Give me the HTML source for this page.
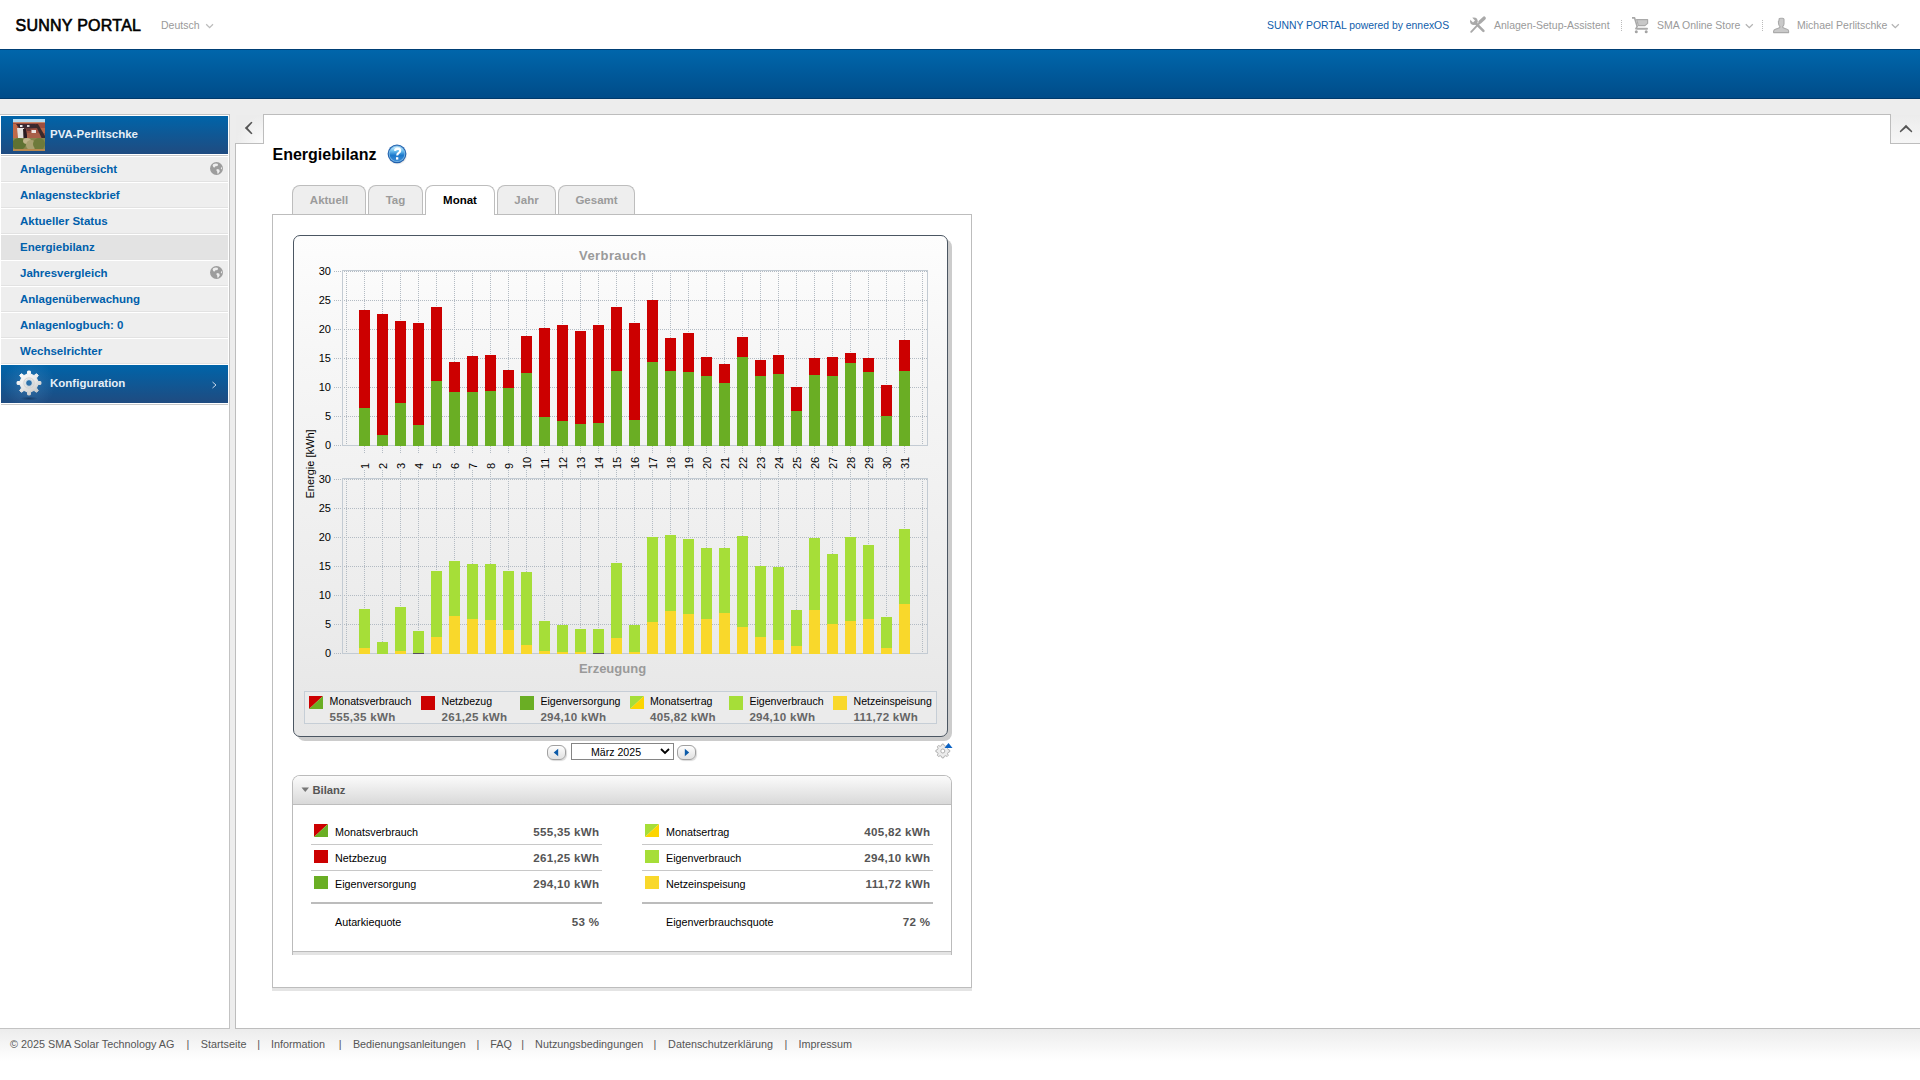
<!DOCTYPE html>
<html><head><meta charset="utf-8"><title>Sunny Portal - Energiebilanz</title>
<style>
*{margin:0;padding:0;box-sizing:border-box}
html,body{width:1920px;height:1080px;overflow:hidden;background:#fff;font-family:"Liberation Sans",sans-serif;color:#000}
.a{position:absolute}
.t{position:absolute;white-space:nowrap;line-height:1}
.b{font-weight:bold}
svg{position:absolute;overflow:visible}
</style></head><body>
<div class="t" style="left:15.5px;top:17.70px;font-size:16px;color:#000;letter-spacing:0.25px;-webkit-text-stroke:0.6px #000;">SUNNY PORTAL</div>
<div class="t" style="left:161px;top:20.05px;font-size:10.5px;color:#999;">Deutsch</div>
<svg style="left:204px;top:21px" width="11" height="9"><polyline points="2.2,3.2 5.6,6.6 9,3.2" fill="none" stroke="#bcbcbc" stroke-width="1.3"/></svg>
<div class="t" style="left:1267px;top:21.00px;font-size:10.4px;color:#0f5dab;">SUNNY PORTAL powered by ennexOS</div>
<svg style="left:1466px;top:14px" width="24" height="22" viewBox="1466 14 24 22">
<g stroke="#a9a9a9" fill="none">
<line x1="1474.6" y1="22.2" x2="1483.4" y2="30.9" stroke-width="2.6" stroke-linecap="round"/>
<line x1="1479.2" y1="23.4" x2="1471.2" y2="31.8" stroke-width="1.9" stroke-linecap="round"/>
<line x1="1480.0" y1="22.0" x2="1484.1" y2="18.2" stroke-width="3.5" stroke-linecap="round"/>
</g>
<circle cx="1473.9" cy="21.3" r="3.8" fill="#a9a9a9"/>
<polygon points="1475.0,20.4 1473.0,22.4 1468.6,18.0 1470.6,16.0" fill="#ffffff"/>
</svg>
<div class="t" style="left:1494px;top:20.45px;font-size:10.5px;color:#9a9a9a;">Anlagen-Setup-Assistent</div>
<div class="a" style="left:1621px;top:20px;width:1px;height:11px;background:repeating-linear-gradient(#bbb 0 1px,transparent 1px 2px)"></div>
<svg style="left:1628px;top:14px" width="24" height="22" viewBox="1628 14 24 22">
<path d="M1636.6 19.6 L1647.6 19.6 L1647.6 23.4 L1645 25.6 L1638.4 25.6 Z" fill="#c8c8c8" stroke="#aaaaaa" stroke-width="1.2" stroke-linejoin="round"/>
<path d="M1632 17.9 L1634.6 17.9 L1637.2 26.4 L1635.6 29.4" fill="none" stroke="#a8a8a8" stroke-width="1.6" stroke-linejoin="round"/>
<rect x="1636.2" y="27.8" width="11.8" height="1.9" rx="0.9" fill="#ababab"/>
<circle cx="1636.3" cy="31.8" r="1.5" fill="#a4a4a4"/><circle cx="1646.2" cy="31.8" r="1.5" fill="#a4a4a4"/>
</svg>
<div class="t" style="left:1657px;top:20.45px;font-size:10.5px;color:#9a9a9a;">SMA Online Store</div>
<svg style="left:1744px;top:22px" width="10" height="8"><polyline points="1.8,2.2 5.3,5.7 8.8,2.2" fill="none" stroke="#b4b4b4" stroke-width="1.3"/></svg>
<div class="a" style="left:1762px;top:20px;width:1px;height:11px;background:repeating-linear-gradient(#bbb 0 1px,transparent 1px 2px)"></div>
<svg style="left:1769px;top:14px" width="24" height="22" viewBox="1769 14 24 22">
<path d="M1779.2 18.8 Q1779.4 18.3 1780.8 18.3 L1782.6 18.3 Q1783.9 18.3 1784 19.4 L1784 24 Q1783.8 25.6 1782.6 26.6 L1782.8 27.4 Q1785 28.6 1786.4 29 Q1788.6 29.6 1788.6 31 L1788.6 32.6 L1773.6 32.6 L1773.6 31 Q1773.8 29.6 1776 29 Q1777.6 28.6 1779.8 27.4 L1780 26.6 Q1778.8 25.4 1778.6 24 L1778.4 21.4 L1778.9 20.8 Z" fill="#c9c9c9" stroke="#aaaaaa" stroke-width="1.1" stroke-linejoin="round"/>
</svg>
<div class="t" style="left:1797px;top:20.45px;font-size:10.5px;color:#9a9a9a;">Michael Perlitschke</div>
<svg style="left:1890px;top:22px" width="10" height="8"><polyline points="1.8,2.2 5.3,5.7 8.8,2.2" fill="none" stroke="#b4b4b4" stroke-width="1.3"/></svg>
<div class="a" style="left:0px;top:49px;width:1920px;height:50px;background:linear-gradient(#0066ab,#004c89);border-top:1px solid #003f75;border-bottom:1px solid #003a6c"></div>
<div class="a" style="left:0px;top:99px;width:1920px;height:930px;background:#ededed"></div>
<div class="a" style="left:0px;top:114px;width:230px;height:915px;background:#fff;border-top:1px solid #c3c3c3;border-right:1px solid #c3c3c3;border-bottom:1px solid #c3c3c3"></div>
<div class="a" style="left:1px;top:116px;width:227px;height:38px;background:linear-gradient(#0064a9,#1f4b80)"></div>
<div class="a" style="left:1px;top:155px;width:227px;height:1px;background:#c9c9c9"></div>
<svg style="left:13px;top:119px;overflow:hidden" width="32" height="32" viewBox="0 0 32 32">
<defs><filter id="bl" x="0" y="0" width="32" height="32" filterUnits="userSpaceOnUse"><feGaussianBlur stdDeviation="0.55"/></filter></defs>
<rect x="0" y="0" width="32" height="32" fill="#9a5a42"/>
<g filter="url(#bl)">
<rect x="-2" y="-2" width="36" height="5" fill="#b4dcf2"/>
<rect x="-2" y="3" width="36" height="2" fill="#c9886a"/>
<rect x="-2" y="4" width="36" height="18" fill="#9e5040"/>
<path d="M0 5 L4 5 L5 22 L0 22 Z" fill="#c06a48"/>
<path d="M3 5 L22 5 L26 9 L7 10 Z" fill="#3a2c30"/>
<rect x="7" y="6" width="2.5" height="2" fill="#e8e8ec"/>
<rect x="14" y="6" width="2.5" height="2" fill="#d8d0d0"/>
<path d="M4 9 L11 9 L11 19 L5 19 Z" fill="#e6e2de"/>
<path d="M10 10 L13 10 L14.5 19 L10.5 19 Z" fill="#2a1c22"/>
<path d="M13 9 L17 9 L18 12 L14 12 Z" fill="#6a3a38"/>
<rect x="18.5" y="11" width="4.5" height="3.2" fill="#ece6e2"/>
<path d="M14 14 L28 14 L30 21 L14 21 Z" fill="#a86048"/>
<path d="M24 9 L32 9 L32 14 L27 14 Z" fill="#b8684a"/>
<path d="M22 5 L25 5 L32 17 L32 21 L29.5 21 Z" fill="#3e2a2c"/>
<rect x="-2" y="19" width="36" height="14" fill="#86864e"/>
<ellipse cx="6" cy="25" rx="7" ry="6" fill="#5e7232"/>
<ellipse cx="14" cy="22" rx="4" ry="3" fill="#c0b48a"/>
<ellipse cx="18" cy="26" rx="5" ry="5" fill="#a8a070"/>
<ellipse cx="26" cy="25" rx="6" ry="6" fill="#6e7a3a"/>
<rect x="-2" y="30" width="36" height="4" fill="#b88850"/>
</g></svg>
<div class="t" style="left:50px;top:128.55px;font-size:11.5px;color:#e6eef7;font-weight:bold;">PVA-Perlitschke</div>
<div class="a" style="left:1px;top:157px;width:227px;height:24px;background:#eeeeee"></div>
<div class="a" style="left:1px;top:181px;width:227px;height:1px;background:#e2e2e2"></div>
<div class="t" style="left:20px;top:163.75px;font-size:11.5px;color:#0060ab;font-weight:bold;">Anlagen&uuml;bersicht</div>
<svg style="left:210px;top:162px" width="13" height="13" viewBox="0 0 13 13">
<circle cx="6.5" cy="6.5" r="6.5" fill="#9d9d9d"/>
<path d="M3.2 2.2 Q5.5 1 7.5 1.8 L8.2 3 L7 4.2 L5.8 4 L4.6 5.6 L3.4 5.2 L2.6 3.6 Z" fill="#eee"/>
<path d="M6.8 7 L9.2 7.6 L9.8 9.2 L8.4 11.6 L7.4 11.8 L7.2 9.4 L6.4 8.4 Z" fill="#eee"/>
<path d="M11.2 5 L12.2 6 L11.8 7.6 L10.8 6.6 Z" fill="#eee"/>
</svg>
<div class="a" style="left:1px;top:183px;width:227px;height:24px;background:#eeeeee"></div>
<div class="a" style="left:1px;top:207px;width:227px;height:1px;background:#e2e2e2"></div>
<div class="t" style="left:20px;top:189.75px;font-size:11.5px;color:#0060ab;font-weight:bold;">Anlagensteckbrief</div>
<div class="a" style="left:1px;top:209px;width:227px;height:24px;background:#eeeeee"></div>
<div class="a" style="left:1px;top:233px;width:227px;height:1px;background:#e2e2e2"></div>
<div class="t" style="left:20px;top:215.75px;font-size:11.5px;color:#0060ab;font-weight:bold;">Aktueller Status</div>
<div class="a" style="left:1px;top:235px;width:227px;height:24px;background:#e3e3e3"></div>
<div class="a" style="left:1px;top:259px;width:227px;height:1px;background:#e2e2e2"></div>
<div class="t" style="left:20px;top:241.75px;font-size:11.5px;color:#0060ab;font-weight:bold;">Energiebilanz</div>
<div class="a" style="left:1px;top:261px;width:227px;height:24px;background:#eeeeee"></div>
<div class="a" style="left:1px;top:285px;width:227px;height:1px;background:#e2e2e2"></div>
<div class="t" style="left:20px;top:267.75px;font-size:11.5px;color:#0060ab;font-weight:bold;">Jahresvergleich</div>
<svg style="left:210px;top:266px" width="13" height="13" viewBox="0 0 13 13">
<circle cx="6.5" cy="6.5" r="6.5" fill="#9d9d9d"/>
<path d="M3.2 2.2 Q5.5 1 7.5 1.8 L8.2 3 L7 4.2 L5.8 4 L4.6 5.6 L3.4 5.2 L2.6 3.6 Z" fill="#eee"/>
<path d="M6.8 7 L9.2 7.6 L9.8 9.2 L8.4 11.6 L7.4 11.8 L7.2 9.4 L6.4 8.4 Z" fill="#eee"/>
<path d="M11.2 5 L12.2 6 L11.8 7.6 L10.8 6.6 Z" fill="#eee"/>
</svg>
<div class="a" style="left:1px;top:287px;width:227px;height:24px;background:#eeeeee"></div>
<div class="a" style="left:1px;top:311px;width:227px;height:1px;background:#e2e2e2"></div>
<div class="t" style="left:20px;top:293.75px;font-size:11.5px;color:#0060ab;font-weight:bold;">Anlagen&uuml;berwachung</div>
<div class="a" style="left:1px;top:313px;width:227px;height:24px;background:#eeeeee"></div>
<div class="a" style="left:1px;top:337px;width:227px;height:1px;background:#e2e2e2"></div>
<div class="t" style="left:20px;top:319.75px;font-size:11.5px;color:#0060ab;font-weight:bold;">Anlagenlogbuch: 0</div>
<div class="a" style="left:1px;top:339px;width:227px;height:24px;background:#eeeeee"></div>
<div class="a" style="left:1px;top:363px;width:227px;height:1px;background:#e2e2e2"></div>
<div class="t" style="left:20px;top:345.75px;font-size:11.5px;color:#0060ab;font-weight:bold;">Wechselrichter</div>
<div class="a" style="left:1px;top:365px;width:227px;height:38px;background:radial-gradient(circle at 28px 19px,rgba(120,175,225,0.30) 0,rgba(120,175,225,0.12) 14px,rgba(120,175,225,0) 26px),linear-gradient(#0064a9,#1f4b80)"></div>
<div class="a" style="left:1px;top:404px;width:227px;height:1px;background:#c9c9c9"></div>
<svg style="left:12px;top:366px" width="34" height="36" viewBox="12 366 34 36"><defs><linearGradient id="gg" x1="0.2" y1="0" x2="0.8" y2="1"><stop offset="0" stop-color="#ffffff"/><stop offset="0.55" stop-color="#e6e6e6"/><stop offset="1" stop-color="#c4c4c4"/></linearGradient><radialGradient id="gsh" cx="0.5" cy="0.5" r="0.5"><stop offset="0" stop-color="#0a2a50" stop-opacity="0.6"/><stop offset="1" stop-color="#0a2a50" stop-opacity="0"/></radialGradient></defs><ellipse cx="29" cy="398.5" rx="9" ry="2" fill="url(#gsh)"/><path d="M27.28,374.17 L27.75,371.07 L30.25,371.07 L30.72,374.17 L34.03,375.54 L36.55,373.67 L38.33,375.45 L36.46,377.97 L37.83,381.28 L40.93,381.75 L40.93,384.25 L37.83,384.72 L36.46,388.03 L38.33,390.55 L36.55,392.33 L34.03,390.46 L30.72,391.83 L30.25,394.93 L27.75,394.93 L27.28,391.83 L23.97,390.46 L21.45,392.33 L19.67,390.55 L21.54,388.03 L20.17,384.72 L17.07,384.25 L17.07,381.75 L20.17,381.28 L21.54,377.97 L19.67,375.45 L21.45,373.67 L23.97,375.54 Z M32.4,383 A3.4,3.4 0 1 0 25.6,383 A3.4,3.4 0 1 0 32.4,383 Z" fill="url(#gg)" fill-rule="evenodd" stroke="url(#gg)" stroke-width="1" stroke-linejoin="round" /><circle cx="29" cy="383" r="5.2" fill="none" stroke="#cfcfcf" stroke-width="1.2" opacity="0.8"/></svg>
<div class="t" style="left:50px;top:378.15px;font-size:11.5px;color:#e6eef7;font-weight:bold;">Konfiguration</div>
<svg style="left:211px;top:381px" width="7" height="8"><polyline points="1.5,1 5,4 1.5,7" fill="none" stroke="#c8d8ea" stroke-width="1"/></svg>
<div class="a" style="left:235px;top:143px;width:1685px;height:886px;background:#fff;border-left:1px solid #bdbdbd;border-top:1px solid #bdbdbd;border-bottom:1px solid #bdbdbd"></div>
<div class="a" style="left:263px;top:114px;width:1628px;height:30px;background:#fff;border-left:1px solid #bdbdbd;border-top:1px solid #bdbdbd;border-right:1px solid #bdbdbd"></div>
<div class="a" style="left:236px;top:115px;width:27px;height:28px;background:radial-gradient(ellipse at 100% 100%,#fbfbfb 0,#ececec 70%)"></div>
<svg style="left:240px;top:118px" width="16" height="20" viewBox="240 118 16 20"><polygon points="251.3,121.7 252.5,122.4 247.7,128 252.5,133.6 251.3,134.3 244.8,128" fill="#555"/></svg>
<div class="a" style="left:1891px;top:115px;width:29px;height:28px;background:linear-gradient(#ececec,#f6f6f6)"></div>
<svg style="left:1896px;top:120px" width="20" height="16" viewBox="1896 120 20 16"><polygon points="1899.7,131.3 1900.4,132.5 1906,127.7 1911.6,132.5 1912.3,131.3 1906,124.8" fill="#555"/></svg>
<div class="t" style="left:272.5px;top:147.00px;font-size:16px;color:#000;font-weight:bold;">Energiebilanz</div>
<svg style="left:386px;top:143px" width="22" height="22" viewBox="386 143 22 22">
<defs><linearGradient id="hg" x1="0" y1="0" x2="0" y2="1"><stop offset="0" stop-color="#d8f4ff"/><stop offset="0.3" stop-color="#6cc0f0"/><stop offset="0.6" stop-color="#1a78cc"/><stop offset="1" stop-color="#3a8ad4"/></linearGradient>
<radialGradient id="hs" cx="0.5" cy="0.5" r="0.5"><stop offset="0.7" stop-color="#000" stop-opacity="0.18"/><stop offset="1" stop-color="#000" stop-opacity="0"/></radialGradient></defs>
<ellipse cx="397.5" cy="155.5" rx="10" ry="9.5" fill="url(#hs)"/>
<circle cx="397" cy="153.8" r="9.4" fill="#2160ad"/>
<circle cx="397" cy="153.8" r="8.3" fill="#7ab8e6"/>
<circle cx="397" cy="153.8" r="7.4" fill="url(#hg)"/>
<path d="M395 150.8 Q395.2 148.8 397.6 148.6 Q400.2 148.6 400.2 150.8 Q400.2 152.2 398.6 153 Q397.2 153.8 397.2 155.6" fill="none" stroke="#fff" stroke-width="2.1"/>
<rect x="396" y="157.2" width="2.3" height="2.4" fill="#fff"/>
</svg>
<div class="a" style="left:272px;top:988px;width:700px;height:3px;background:#e4e4e4"></div>
<div class="a" style="left:272px;top:214px;width:700px;height:774px;background:#fff;border:1px solid #bdbdbd"></div>
<div class="a" style="left:292px;top:185px;width:74px;height:29px;background:#eeeeee;border:1px solid #bdbdbd;border-bottom:none;border-radius:8px 8px 0 0"></div>
<div class="t" style="left:279.0px;width:100px;text-align:center;top:194.75px;font-size:11.5px;color:#9b9b9b;font-weight:bold;">Aktuell</div>
<div class="a" style="left:368px;top:185px;width:55px;height:29px;background:#eeeeee;border:1px solid #bdbdbd;border-bottom:none;border-radius:8px 8px 0 0"></div>
<div class="t" style="left:345.5px;width:100px;text-align:center;top:194.75px;font-size:11.5px;color:#9b9b9b;font-weight:bold;">Tag</div>
<div class="a" style="left:425px;top:185px;width:70px;height:30px;background:#fff;border:1px solid #bdbdbd;border-bottom:none;border-radius:8px 8px 0 0"></div>
<div class="t" style="left:410.0px;width:100px;text-align:center;top:194.75px;font-size:11.5px;color:#000;font-weight:bold;">Monat</div>
<div class="a" style="left:497px;top:185px;width:59px;height:29px;background:#eeeeee;border:1px solid #bdbdbd;border-bottom:none;border-radius:8px 8px 0 0"></div>
<div class="t" style="left:476.5px;width:100px;text-align:center;top:194.75px;font-size:11.5px;color:#9b9b9b;font-weight:bold;">Jahr</div>
<div class="a" style="left:558px;top:185px;width:77px;height:29px;background:#eeeeee;border:1px solid #bdbdbd;border-bottom:none;border-radius:8px 8px 0 0"></div>
<div class="t" style="left:546.5px;width:100px;text-align:center;top:194.75px;font-size:11.5px;color:#9b9b9b;font-weight:bold;">Gesamt</div>
<div class="a" style="left:297px;top:239px;width:655px;height:502px;background:#cccccc;border-radius:8px"></div>
<div class="a" style="left:293px;top:235px;width:655px;height:502px;background:linear-gradient(#fdfdfd,#f6f6f6 25%,#ececec 75%,#e6e6e6);border:1px solid #4b5662;border-radius:7px"></div>
<svg style="left:293px;top:235px" width="660" height="510" viewBox="293 235 660 510" shape-rendering="crispEdges"><defs><pattern id="hp" x="0" y="0" width="2" height="2" patternUnits="userSpaceOnUse"><rect x="0" y="0" width="1" height="2" fill="#b3bbc3"/></pattern><pattern id="vp" x="0" y="0" width="2" height="2" patternUnits="userSpaceOnUse"><rect x="0" y="1" width="2" height="1" fill="#b3bbc3"/></pattern><pattern id="vp2" x="0" y="0" width="2" height="2" patternUnits="userSpaceOnUse"><rect x="0" y="0" width="2" height="1" fill="#b3bbc3"/></pattern></defs><rect x="334" y="271" width="8" height="1" fill="url(#hp)"/><rect x="334" y="300" width="8" height="1" fill="url(#hp)"/><rect x="344" y="300" width="583" height="1" fill="url(#hp)"/><rect x="334" y="329" width="8" height="1" fill="url(#hp)"/><rect x="344" y="329" width="583" height="1" fill="url(#hp)"/><rect x="334" y="358" width="8" height="1" fill="url(#hp)"/><rect x="344" y="358" width="583" height="1" fill="url(#hp)"/><rect x="334" y="387" width="8" height="1" fill="url(#hp)"/><rect x="344" y="387" width="583" height="1" fill="url(#hp)"/><rect x="334" y="416" width="8" height="1" fill="url(#hp)"/><rect x="344" y="416" width="583" height="1" fill="url(#hp)"/><rect x="334" y="445" width="8" height="1" fill="url(#hp)"/><rect x="344" y="271" width="583" height="1" fill="url(#hp)"/><rect x="346" y="271" width="1" height="174" fill="url(#vp)"/><rect x="364" y="271" width="1" height="174" fill="url(#vp)"/><rect x="382" y="271" width="1" height="174" fill="url(#vp)"/><rect x="400" y="271" width="1" height="174" fill="url(#vp)"/><rect x="418" y="271" width="1" height="174" fill="url(#vp)"/><rect x="436" y="271" width="1" height="174" fill="url(#vp)"/><rect x="454" y="271" width="1" height="174" fill="url(#vp)"/><rect x="472" y="271" width="1" height="174" fill="url(#vp)"/><rect x="490" y="271" width="1" height="174" fill="url(#vp)"/><rect x="508" y="271" width="1" height="174" fill="url(#vp)"/><rect x="526" y="271" width="1" height="174" fill="url(#vp)"/><rect x="544" y="271" width="1" height="174" fill="url(#vp)"/><rect x="562" y="271" width="1" height="174" fill="url(#vp)"/><rect x="580" y="271" width="1" height="174" fill="url(#vp)"/><rect x="598" y="271" width="1" height="174" fill="url(#vp)"/><rect x="616" y="271" width="1" height="174" fill="url(#vp)"/><rect x="634" y="271" width="1" height="174" fill="url(#vp)"/><rect x="652" y="271" width="1" height="174" fill="url(#vp)"/><rect x="670" y="271" width="1" height="174" fill="url(#vp)"/><rect x="688" y="271" width="1" height="174" fill="url(#vp)"/><rect x="706" y="271" width="1" height="174" fill="url(#vp)"/><rect x="724" y="271" width="1" height="174" fill="url(#vp)"/><rect x="742" y="271" width="1" height="174" fill="url(#vp)"/><rect x="760" y="271" width="1" height="174" fill="url(#vp)"/><rect x="778" y="271" width="1" height="174" fill="url(#vp)"/><rect x="796" y="271" width="1" height="174" fill="url(#vp)"/><rect x="814" y="271" width="1" height="174" fill="url(#vp)"/><rect x="832" y="271" width="1" height="174" fill="url(#vp)"/><rect x="850" y="271" width="1" height="174" fill="url(#vp)"/><rect x="868" y="271" width="1" height="174" fill="url(#vp)"/><rect x="886" y="271" width="1" height="174" fill="url(#vp)"/><rect x="904" y="271" width="1" height="174" fill="url(#vp)"/><rect x="922" y="271" width="1" height="174" fill="url(#vp)"/><rect x="342" y="270" width="586" height="1" fill="#c3cbd3"/><rect x="342" y="270" width="1" height="176" fill="#c3cbd3"/><rect x="927" y="270" width="1" height="176" fill="#c3cbd3"/><rect x="342" y="445" width="586" height="1" fill="#c3cbd3"/><rect x="364" y="446" width="1" height="7" fill="url(#vp2)"/><rect x="382" y="446" width="1" height="7" fill="url(#vp2)"/><rect x="400" y="446" width="1" height="7" fill="url(#vp2)"/><rect x="418" y="446" width="1" height="7" fill="url(#vp2)"/><rect x="436" y="446" width="1" height="7" fill="url(#vp2)"/><rect x="454" y="446" width="1" height="7" fill="url(#vp2)"/><rect x="472" y="446" width="1" height="7" fill="url(#vp2)"/><rect x="490" y="446" width="1" height="7" fill="url(#vp2)"/><rect x="508" y="446" width="1" height="7" fill="url(#vp2)"/><rect x="526" y="446" width="1" height="7" fill="url(#vp2)"/><rect x="544" y="446" width="1" height="7" fill="url(#vp2)"/><rect x="562" y="446" width="1" height="7" fill="url(#vp2)"/><rect x="580" y="446" width="1" height="7" fill="url(#vp2)"/><rect x="598" y="446" width="1" height="7" fill="url(#vp2)"/><rect x="616" y="446" width="1" height="7" fill="url(#vp2)"/><rect x="634" y="446" width="1" height="7" fill="url(#vp2)"/><rect x="652" y="446" width="1" height="7" fill="url(#vp2)"/><rect x="670" y="446" width="1" height="7" fill="url(#vp2)"/><rect x="688" y="446" width="1" height="7" fill="url(#vp2)"/><rect x="706" y="446" width="1" height="7" fill="url(#vp2)"/><rect x="724" y="446" width="1" height="7" fill="url(#vp2)"/><rect x="742" y="446" width="1" height="7" fill="url(#vp2)"/><rect x="760" y="446" width="1" height="7" fill="url(#vp2)"/><rect x="778" y="446" width="1" height="7" fill="url(#vp2)"/><rect x="796" y="446" width="1" height="7" fill="url(#vp2)"/><rect x="814" y="446" width="1" height="7" fill="url(#vp2)"/><rect x="832" y="446" width="1" height="7" fill="url(#vp2)"/><rect x="850" y="446" width="1" height="7" fill="url(#vp2)"/><rect x="868" y="446" width="1" height="7" fill="url(#vp2)"/><rect x="886" y="446" width="1" height="7" fill="url(#vp2)"/><rect x="904" y="446" width="1" height="7" fill="url(#vp2)"/><rect x="359" y="310" width="11" height="98" fill="#cc0000"/><rect x="359" y="408" width="11" height="38" fill="#6aae24"/><rect x="377" y="314" width="11" height="121" fill="#cc0000"/><rect x="377" y="435" width="11" height="11" fill="#6aae24"/><rect x="395" y="321" width="11" height="82" fill="#cc0000"/><rect x="395" y="403" width="11" height="43" fill="#6aae24"/><rect x="413" y="323" width="11" height="102" fill="#cc0000"/><rect x="413" y="425" width="11" height="21" fill="#6aae24"/><rect x="431" y="307" width="11" height="74" fill="#cc0000"/><rect x="431" y="381" width="11" height="65" fill="#6aae24"/><rect x="449" y="362" width="11" height="30" fill="#cc0000"/><rect x="449" y="392" width="11" height="54" fill="#6aae24"/><rect x="467" y="356" width="11" height="36" fill="#cc0000"/><rect x="467" y="392" width="11" height="54" fill="#6aae24"/><rect x="485" y="355" width="11" height="36" fill="#cc0000"/><rect x="485" y="391" width="11" height="55" fill="#6aae24"/><rect x="503" y="370" width="11" height="18" fill="#cc0000"/><rect x="503" y="388" width="11" height="58" fill="#6aae24"/><rect x="521" y="336" width="11" height="37" fill="#cc0000"/><rect x="521" y="373" width="11" height="73" fill="#6aae24"/><rect x="539" y="328" width="11" height="89" fill="#cc0000"/><rect x="539" y="417" width="11" height="29" fill="#6aae24"/><rect x="557" y="325" width="11" height="96" fill="#cc0000"/><rect x="557" y="421" width="11" height="25" fill="#6aae24"/><rect x="575" y="331" width="11" height="93" fill="#cc0000"/><rect x="575" y="424" width="11" height="22" fill="#6aae24"/><rect x="593" y="325" width="11" height="98" fill="#cc0000"/><rect x="593" y="423" width="11" height="23" fill="#6aae24"/><rect x="611" y="307" width="11" height="64" fill="#cc0000"/><rect x="611" y="371" width="11" height="75" fill="#6aae24"/><rect x="629" y="323" width="11" height="97" fill="#cc0000"/><rect x="629" y="420" width="11" height="26" fill="#6aae24"/><rect x="647" y="300" width="11" height="62" fill="#cc0000"/><rect x="647" y="362" width="11" height="84" fill="#6aae24"/><rect x="665" y="338" width="11" height="33" fill="#cc0000"/><rect x="665" y="371" width="11" height="75" fill="#6aae24"/><rect x="683" y="333" width="11" height="39" fill="#cc0000"/><rect x="683" y="372" width="11" height="74" fill="#6aae24"/><rect x="701" y="357" width="11" height="19" fill="#cc0000"/><rect x="701" y="376" width="11" height="70" fill="#6aae24"/><rect x="719" y="364" width="11" height="19" fill="#cc0000"/><rect x="719" y="383" width="11" height="63" fill="#6aae24"/><rect x="737" y="337" width="11" height="20" fill="#cc0000"/><rect x="737" y="357" width="11" height="89" fill="#6aae24"/><rect x="755" y="360" width="11" height="16" fill="#cc0000"/><rect x="755" y="376" width="11" height="70" fill="#6aae24"/><rect x="773" y="355" width="11" height="19" fill="#cc0000"/><rect x="773" y="374" width="11" height="72" fill="#6aae24"/><rect x="791" y="387" width="11" height="24" fill="#cc0000"/><rect x="791" y="411" width="11" height="35" fill="#6aae24"/><rect x="809" y="358" width="11" height="17" fill="#cc0000"/><rect x="809" y="375" width="11" height="71" fill="#6aae24"/><rect x="827" y="357" width="11" height="19" fill="#cc0000"/><rect x="827" y="376" width="11" height="70" fill="#6aae24"/><rect x="845" y="353" width="11" height="10" fill="#cc0000"/><rect x="845" y="363" width="11" height="83" fill="#6aae24"/><rect x="863" y="358" width="11" height="14" fill="#cc0000"/><rect x="863" y="372" width="11" height="74" fill="#6aae24"/><rect x="881" y="385" width="11" height="31" fill="#cc0000"/><rect x="881" y="416" width="11" height="30" fill="#6aae24"/><rect x="899" y="340" width="11" height="31" fill="#cc0000"/><rect x="899" y="371" width="11" height="75" fill="#6aae24"/><rect x="334" y="479" width="8" height="1" fill="url(#hp)"/><rect x="334" y="508" width="8" height="1" fill="url(#hp)"/><rect x="344" y="508" width="583" height="1" fill="url(#hp)"/><rect x="334" y="537" width="8" height="1" fill="url(#hp)"/><rect x="344" y="537" width="583" height="1" fill="url(#hp)"/><rect x="334" y="566" width="8" height="1" fill="url(#hp)"/><rect x="344" y="566" width="583" height="1" fill="url(#hp)"/><rect x="334" y="595" width="8" height="1" fill="url(#hp)"/><rect x="344" y="595" width="583" height="1" fill="url(#hp)"/><rect x="334" y="624" width="8" height="1" fill="url(#hp)"/><rect x="344" y="624" width="583" height="1" fill="url(#hp)"/><rect x="334" y="653" width="8" height="1" fill="url(#hp)"/><rect x="344" y="479" width="583" height="1" fill="url(#hp)"/><rect x="346" y="479" width="1" height="174" fill="url(#vp)"/><rect x="364" y="479" width="1" height="174" fill="url(#vp)"/><rect x="382" y="479" width="1" height="174" fill="url(#vp)"/><rect x="400" y="479" width="1" height="174" fill="url(#vp)"/><rect x="418" y="479" width="1" height="174" fill="url(#vp)"/><rect x="436" y="479" width="1" height="174" fill="url(#vp)"/><rect x="454" y="479" width="1" height="174" fill="url(#vp)"/><rect x="472" y="479" width="1" height="174" fill="url(#vp)"/><rect x="490" y="479" width="1" height="174" fill="url(#vp)"/><rect x="508" y="479" width="1" height="174" fill="url(#vp)"/><rect x="526" y="479" width="1" height="174" fill="url(#vp)"/><rect x="544" y="479" width="1" height="174" fill="url(#vp)"/><rect x="562" y="479" width="1" height="174" fill="url(#vp)"/><rect x="580" y="479" width="1" height="174" fill="url(#vp)"/><rect x="598" y="479" width="1" height="174" fill="url(#vp)"/><rect x="616" y="479" width="1" height="174" fill="url(#vp)"/><rect x="634" y="479" width="1" height="174" fill="url(#vp)"/><rect x="652" y="479" width="1" height="174" fill="url(#vp)"/><rect x="670" y="479" width="1" height="174" fill="url(#vp)"/><rect x="688" y="479" width="1" height="174" fill="url(#vp)"/><rect x="706" y="479" width="1" height="174" fill="url(#vp)"/><rect x="724" y="479" width="1" height="174" fill="url(#vp)"/><rect x="742" y="479" width="1" height="174" fill="url(#vp)"/><rect x="760" y="479" width="1" height="174" fill="url(#vp)"/><rect x="778" y="479" width="1" height="174" fill="url(#vp)"/><rect x="796" y="479" width="1" height="174" fill="url(#vp)"/><rect x="814" y="479" width="1" height="174" fill="url(#vp)"/><rect x="832" y="479" width="1" height="174" fill="url(#vp)"/><rect x="850" y="479" width="1" height="174" fill="url(#vp)"/><rect x="868" y="479" width="1" height="174" fill="url(#vp)"/><rect x="886" y="479" width="1" height="174" fill="url(#vp)"/><rect x="904" y="479" width="1" height="174" fill="url(#vp)"/><rect x="922" y="479" width="1" height="174" fill="url(#vp)"/><rect x="342" y="478" width="586" height="1" fill="#c3cbd3"/><rect x="342" y="478" width="1" height="176" fill="#c3cbd3"/><rect x="927" y="478" width="1" height="176" fill="#c3cbd3"/><rect x="342" y="653" width="586" height="1" fill="#c3cbd3"/><rect x="364" y="470" width="1" height="7" fill="url(#vp2)"/><rect x="382" y="470" width="1" height="7" fill="url(#vp2)"/><rect x="400" y="470" width="1" height="7" fill="url(#vp2)"/><rect x="418" y="470" width="1" height="7" fill="url(#vp2)"/><rect x="436" y="470" width="1" height="7" fill="url(#vp2)"/><rect x="454" y="470" width="1" height="7" fill="url(#vp2)"/><rect x="472" y="470" width="1" height="7" fill="url(#vp2)"/><rect x="490" y="470" width="1" height="7" fill="url(#vp2)"/><rect x="508" y="470" width="1" height="7" fill="url(#vp2)"/><rect x="526" y="470" width="1" height="7" fill="url(#vp2)"/><rect x="544" y="470" width="1" height="7" fill="url(#vp2)"/><rect x="562" y="470" width="1" height="7" fill="url(#vp2)"/><rect x="580" y="470" width="1" height="7" fill="url(#vp2)"/><rect x="598" y="470" width="1" height="7" fill="url(#vp2)"/><rect x="616" y="470" width="1" height="7" fill="url(#vp2)"/><rect x="634" y="470" width="1" height="7" fill="url(#vp2)"/><rect x="652" y="470" width="1" height="7" fill="url(#vp2)"/><rect x="670" y="470" width="1" height="7" fill="url(#vp2)"/><rect x="688" y="470" width="1" height="7" fill="url(#vp2)"/><rect x="706" y="470" width="1" height="7" fill="url(#vp2)"/><rect x="724" y="470" width="1" height="7" fill="url(#vp2)"/><rect x="742" y="470" width="1" height="7" fill="url(#vp2)"/><rect x="760" y="470" width="1" height="7" fill="url(#vp2)"/><rect x="778" y="470" width="1" height="7" fill="url(#vp2)"/><rect x="796" y="470" width="1" height="7" fill="url(#vp2)"/><rect x="814" y="470" width="1" height="7" fill="url(#vp2)"/><rect x="832" y="470" width="1" height="7" fill="url(#vp2)"/><rect x="850" y="470" width="1" height="7" fill="url(#vp2)"/><rect x="868" y="470" width="1" height="7" fill="url(#vp2)"/><rect x="886" y="470" width="1" height="7" fill="url(#vp2)"/><rect x="904" y="470" width="1" height="7" fill="url(#vp2)"/><rect x="359" y="609" width="11" height="39" fill="#a6de38"/><rect x="359" y="648" width="11" height="6" fill="#f9d82b"/><rect x="377" y="642" width="11" height="12" fill="#a6de38"/><rect x="395" y="607" width="11" height="44" fill="#a6de38"/><rect x="395" y="651" width="11" height="3" fill="#f9d82b"/><rect x="413" y="631" width="11" height="22" fill="#a6de38"/><rect x="413" y="653" width="11" height="1" fill="#584f5e"/><rect x="431" y="571" width="11" height="66" fill="#a6de38"/><rect x="431" y="637" width="11" height="17" fill="#f9d82b"/><rect x="449" y="561" width="11" height="55" fill="#a6de38"/><rect x="449" y="616" width="11" height="38" fill="#f9d82b"/><rect x="467" y="564" width="11" height="55" fill="#a6de38"/><rect x="467" y="619" width="11" height="35" fill="#f9d82b"/><rect x="485" y="564" width="11" height="56" fill="#a6de38"/><rect x="485" y="620" width="11" height="34" fill="#f9d82b"/><rect x="503" y="571" width="11" height="59" fill="#a6de38"/><rect x="503" y="630" width="11" height="24" fill="#f9d82b"/><rect x="521" y="572" width="11" height="73" fill="#a6de38"/><rect x="521" y="645" width="11" height="9" fill="#f9d82b"/><rect x="539" y="621" width="11" height="30" fill="#a6de38"/><rect x="539" y="651" width="11" height="3" fill="#f9d82b"/><rect x="557" y="625" width="11" height="27" fill="#a6de38"/><rect x="557" y="652" width="11" height="2" fill="#f9d82b"/><rect x="575" y="629" width="11" height="23" fill="#a6de38"/><rect x="575" y="652" width="11" height="2" fill="#f9d82b"/><rect x="593" y="629" width="11" height="24" fill="#a6de38"/><rect x="593" y="653" width="11" height="1" fill="#584f5e"/><rect x="611" y="563" width="11" height="75" fill="#a6de38"/><rect x="611" y="638" width="11" height="16" fill="#f9d82b"/><rect x="629" y="625" width="11" height="27" fill="#a6de38"/><rect x="629" y="652" width="11" height="2" fill="#f9d82b"/><rect x="647" y="537" width="11" height="85" fill="#a6de38"/><rect x="647" y="622" width="11" height="32" fill="#f9d82b"/><rect x="665" y="535" width="11" height="76" fill="#a6de38"/><rect x="665" y="611" width="11" height="43" fill="#f9d82b"/><rect x="683" y="539" width="11" height="75" fill="#a6de38"/><rect x="683" y="614" width="11" height="40" fill="#f9d82b"/><rect x="701" y="548" width="11" height="71" fill="#a6de38"/><rect x="701" y="619" width="11" height="35" fill="#f9d82b"/><rect x="719" y="548" width="11" height="65" fill="#a6de38"/><rect x="719" y="613" width="11" height="41" fill="#f9d82b"/><rect x="737" y="536" width="11" height="91" fill="#a6de38"/><rect x="737" y="627" width="11" height="27" fill="#f9d82b"/><rect x="755" y="566" width="11" height="71" fill="#a6de38"/><rect x="755" y="637" width="11" height="17" fill="#f9d82b"/><rect x="773" y="567" width="11" height="73" fill="#a6de38"/><rect x="773" y="640" width="11" height="14" fill="#f9d82b"/><rect x="791" y="610" width="11" height="36" fill="#a6de38"/><rect x="791" y="646" width="11" height="8" fill="#f9d82b"/><rect x="809" y="538" width="11" height="72" fill="#a6de38"/><rect x="809" y="610" width="11" height="44" fill="#f9d82b"/><rect x="827" y="554" width="11" height="70" fill="#a6de38"/><rect x="827" y="624" width="11" height="30" fill="#f9d82b"/><rect x="845" y="537" width="11" height="84" fill="#a6de38"/><rect x="845" y="621" width="11" height="33" fill="#f9d82b"/><rect x="863" y="545" width="11" height="74" fill="#a6de38"/><rect x="863" y="619" width="11" height="35" fill="#f9d82b"/><rect x="881" y="617" width="11" height="31" fill="#a6de38"/><rect x="881" y="648" width="11" height="6" fill="#f9d82b"/><rect x="899" y="529" width="11" height="75" fill="#a6de38"/><rect x="899" y="604" width="11" height="50" fill="#f9d82b"/></svg>
<svg style="left:293px;top:235px" width="660" height="510" viewBox="293 235 660 510" font-family="Liberation Sans" font-size="11"><text x="331" y="275" text-anchor="end">30</text><text x="331" y="304" text-anchor="end">25</text><text x="331" y="333" text-anchor="end">20</text><text x="331" y="362" text-anchor="end">15</text><text x="331" y="391" text-anchor="end">10</text><text x="331" y="420" text-anchor="end">5</text><text x="331" y="449" text-anchor="end">0</text><text x="331" y="483" text-anchor="end">30</text><text x="331" y="512" text-anchor="end">25</text><text x="331" y="541" text-anchor="end">20</text><text x="331" y="570" text-anchor="end">15</text><text x="331" y="599" text-anchor="end">10</text><text x="331" y="628" text-anchor="end">5</text><text x="331" y="657" text-anchor="end">0</text><text transform="translate(369,469) rotate(-90)">1</text><text transform="translate(387,469) rotate(-90)">2</text><text transform="translate(405,469) rotate(-90)">3</text><text transform="translate(423,469) rotate(-90)">4</text><text transform="translate(441,469) rotate(-90)">5</text><text transform="translate(459,469) rotate(-90)">6</text><text transform="translate(477,469) rotate(-90)">7</text><text transform="translate(495,469) rotate(-90)">8</text><text transform="translate(513,469) rotate(-90)">9</text><text transform="translate(531,469) rotate(-90)">10</text><text transform="translate(549,469) rotate(-90)">11</text><text transform="translate(567,469) rotate(-90)">12</text><text transform="translate(585,469) rotate(-90)">13</text><text transform="translate(603,469) rotate(-90)">14</text><text transform="translate(621,469) rotate(-90)">15</text><text transform="translate(639,469) rotate(-90)">16</text><text transform="translate(657,469) rotate(-90)">17</text><text transform="translate(675,469) rotate(-90)">18</text><text transform="translate(693,469) rotate(-90)">19</text><text transform="translate(711,469) rotate(-90)">20</text><text transform="translate(729,469) rotate(-90)">21</text><text transform="translate(747,469) rotate(-90)">22</text><text transform="translate(765,469) rotate(-90)">23</text><text transform="translate(783,469) rotate(-90)">24</text><text transform="translate(801,469) rotate(-90)">25</text><text transform="translate(819,469) rotate(-90)">26</text><text transform="translate(837,469) rotate(-90)">27</text><text transform="translate(855,469) rotate(-90)">28</text><text transform="translate(873,469) rotate(-90)">29</text><text transform="translate(891,469) rotate(-90)">30</text><text transform="translate(909,469) rotate(-90)">31</text><text transform="translate(314,498.5) rotate(-90)">Energie [kWh]</text><text x="612.7" y="260" text-anchor="middle" font-weight="bold" font-size="13" letter-spacing="0.4" fill="#9a9a9a">Verbrauch</text><text x="612.5" y="673" text-anchor="middle" font-weight="bold" font-size="13" fill="#9a9a9a">Erzeugung</text></svg>
<div class="a" style="left:304px;top:691px;width:633px;height:33px;border:1px solid #c6ced6;background:#ebebeb"></div>
<svg style="left:309px;top:696px" width="14" height="13"><polygon points="0,0 14,0 0,13" fill="#cc0000"/><polygon points="14,0 14,13 0,13" fill="#6aae24"/></svg>
<div class="t" style="left:329.6px;top:696.00px;font-size:10.6px;color:#000;">Monatsverbrauch</div>
<div class="t" style="left:329.6px;top:711.00px;font-size:11.6px;color:#666;font-weight:bold;letter-spacing:0.28px;">555,35 kWh</div>
<svg style="left:421px;top:696px" width="14" height="14"><rect width="14" height="14" fill="#cc0000"/></svg>
<div class="t" style="left:441.5px;top:696.00px;font-size:10.6px;color:#000;">Netzbezug</div>
<div class="t" style="left:441.5px;top:711.00px;font-size:11.6px;color:#666;font-weight:bold;letter-spacing:0.28px;">261,25 kWh</div>
<svg style="left:520px;top:696px" width="14" height="14"><rect width="14" height="14" fill="#6aae24"/></svg>
<div class="t" style="left:540.4px;top:696.00px;font-size:10.6px;color:#000;">Eigenversorgung</div>
<div class="t" style="left:540.4px;top:711.00px;font-size:11.6px;color:#666;font-weight:bold;letter-spacing:0.28px;">294,10 kWh</div>
<svg style="left:630px;top:696px" width="14" height="13"><polygon points="0,0 14,0 0,13" fill="#a6de38"/><polygon points="14,0 14,13 0,13" fill="#fcd500"/></svg>
<div class="t" style="left:650px;top:696.00px;font-size:10.6px;color:#000;">Monatsertrag</div>
<div class="t" style="left:650px;top:711.00px;font-size:11.6px;color:#666;font-weight:bold;letter-spacing:0.28px;">405,82 kWh</div>
<svg style="left:729px;top:696px" width="14" height="14"><rect width="14" height="14" fill="#a6de38"/></svg>
<div class="t" style="left:749.4px;top:696.00px;font-size:10.6px;color:#000;">Eigenverbrauch</div>
<div class="t" style="left:749.4px;top:711.00px;font-size:11.6px;color:#666;font-weight:bold;letter-spacing:0.28px;">294,10 kWh</div>
<svg style="left:833px;top:696px" width="14" height="14"><rect width="14" height="14" fill="#f9d82b"/></svg>
<div class="t" style="left:853.5px;top:696.00px;font-size:10.6px;color:#000;">Netzeinspeisung</div>
<div class="t" style="left:853.5px;top:711.00px;font-size:11.6px;color:#666;font-weight:bold;letter-spacing:0.28px;">111,72 kWh</div>
<div class="a" style="left:547px;top:745px;width:19px;height:15px;background:linear-gradient(#ffffff,#ececec 60%,#e2e2e2);border:1px solid #a0a0a0;border-radius:6px;box-shadow:1px 1px 1px rgba(0,0,0,0.15)"></div>
<svg style="left:550px;top:746px" width="12" height="14" viewBox="550 746 12 14"><polygon points="558.2,748.8 558.2,756.2 553.7,752.5" fill="#0b5aa8"/></svg>
<div class="a" style="left:677px;top:745px;width:19px;height:15px;background:linear-gradient(#ffffff,#ececec 60%,#e2e2e2);border:1px solid #a0a0a0;border-radius:6px;box-shadow:1px 1px 1px rgba(0,0,0,0.15)"></div>
<svg style="left:680px;top:746px" width="12" height="14" viewBox="680 746 12 14"><polygon points="684.8,748.8 684.8,756.2 689.2,752.5" fill="#0b5aa8"/></svg>
<div class="a" style="left:571px;top:743px;width:103px;height:17px;background:#fff;border:1px solid #858585"></div>
<div class="t" style="left:576.0px;width:80px;text-align:center;top:747.20px;font-size:10.6px;color:#000;">M&auml;rz 2025</div>
<svg style="left:660px;top:748px" width="10" height="7"><polyline points="1,1 5,5 9,1" fill="none" stroke="#000" stroke-width="1.8"/></svg>
<svg style="left:934px;top:741px" width="20" height="20" viewBox="934 741 20 20"><path d="M949.77,750.31 L949.77,751.69 L947.97,752.57 L947.56,753.55 L948.21,755.44 L947.24,756.41 L945.35,755.76 L944.37,756.17 L943.49,757.97 L942.11,757.97 L941.23,756.17 L940.25,755.76 L938.36,756.41 L937.39,755.44 L938.04,753.55 L937.63,752.57 L935.83,751.69 L935.83,750.31 L937.63,749.43 L938.04,748.45 L937.39,746.56 L938.36,745.59 L940.25,746.24 L941.23,745.83 L942.11,744.03 L943.49,744.03 L944.37,745.83 L945.35,746.24 L947.24,745.59 L948.21,746.56 L947.56,748.45 L947.97,749.43 Z M944.8,751 A2.0,2.0 0 1 0 940.8,751 A2.0,2.0 0 1 0 944.8,751 Z" fill="#ececec" fill-rule="evenodd" stroke="#a0a0a0" stroke-width="0.8"/><polygon points="944.5,748 948.5,743 952.5,748" fill="#0a62c4"/></svg>
<div class="a" style="left:292px;top:775px;width:660px;height:180px;background:#e4e4e4;border:1px solid #bbbbbb;border-bottom:none;border-radius:8px 8px 0 0"></div>
<div class="a" style="left:293px;top:776px;width:658px;height:175px;background:#fff;border-radius:7px 7px 0 0"></div>
<div class="a" style="left:293px;top:951px;width:658px;height:1px;background:#bbbbbb"></div>
<div class="a" style="left:293px;top:776px;width:658px;height:28px;background:linear-gradient(#fbfbfb,#d9d9d9);border-radius:7px 7px 0 0"></div>
<div class="a" style="left:293px;top:804px;width:658px;height:1px;background:#bdbdbd"></div>
<svg style="left:301px;top:787px" width="9" height="6"><polygon points="0.5,0.5 8,0.5 4.25,5" fill="#777"/></svg>
<div class="t" style="left:312.5px;top:784.70px;font-size:11.2px;color:#555;font-weight:bold;">Bilanz</div>
<svg style="left:314px;top:824px" width="14" height="13"><polygon points="0,0 14,0 0,13" fill="#cc0000"/><polygon points="14,0 14,13 0,13" fill="#6aae24"/></svg>
<div class="t" style="left:335px;top:827.12px;font-size:10.75px;color:#000;">Monatsverbrauch</div>
<div class="t" style="left:449.29999999999995px;width:150px;text-align:right;top:826.20px;font-size:11.6px;color:#555;font-weight:bold;letter-spacing:0.28px;">555,35 kWh</div>
<div class="a" style="left:311px;top:844px;width:291px;height:1px;background:#c8c8c8"></div>
<svg style="left:314px;top:850px" width="14" height="13"><rect width="14" height="13" fill="#cc0000"/></svg>
<div class="t" style="left:335px;top:853.12px;font-size:10.75px;color:#000;">Netzbezug</div>
<div class="t" style="left:449.29999999999995px;width:150px;text-align:right;top:852.20px;font-size:11.6px;color:#555;font-weight:bold;letter-spacing:0.28px;">261,25 kWh</div>
<div class="a" style="left:311px;top:870px;width:291px;height:1px;background:#c8c8c8"></div>
<svg style="left:314px;top:876px" width="14" height="13"><rect width="14" height="13" fill="#6aae24"/></svg>
<div class="t" style="left:335px;top:879.12px;font-size:10.75px;color:#000;">Eigenversorgung</div>
<div class="t" style="left:449.29999999999995px;width:150px;text-align:right;top:878.20px;font-size:11.6px;color:#555;font-weight:bold;letter-spacing:0.28px;">294,10 kWh</div>
<div class="a" style="left:311px;top:902px;width:291px;height:2px;background:#bcbcbc"></div>
<div class="t" style="left:335px;top:917.12px;font-size:10.75px;color:#000;">Autarkiequote</div>
<div class="t" style="left:449.29999999999995px;width:150px;text-align:right;top:916.20px;font-size:11.6px;color:#555;font-weight:bold;letter-spacing:0.28px;">53 %</div>
<svg style="left:645px;top:824px" width="14" height="13"><polygon points="0,0 14,0 0,13" fill="#a6de38"/><polygon points="14,0 14,13 0,13" fill="#fcd500"/></svg>
<div class="t" style="left:666px;top:827.12px;font-size:10.75px;color:#000;">Monatsertrag</div>
<div class="t" style="left:780.3px;width:150px;text-align:right;top:826.20px;font-size:11.6px;color:#555;font-weight:bold;letter-spacing:0.28px;">405,82 kWh</div>
<div class="a" style="left:642px;top:844px;width:291px;height:1px;background:#c8c8c8"></div>
<svg style="left:645px;top:850px" width="14" height="13"><rect width="14" height="13" fill="#a6de38"/></svg>
<div class="t" style="left:666px;top:853.12px;font-size:10.75px;color:#000;">Eigenverbrauch</div>
<div class="t" style="left:780.3px;width:150px;text-align:right;top:852.20px;font-size:11.6px;color:#555;font-weight:bold;letter-spacing:0.28px;">294,10 kWh</div>
<div class="a" style="left:642px;top:870px;width:291px;height:1px;background:#c8c8c8"></div>
<svg style="left:645px;top:876px" width="14" height="13"><rect width="14" height="13" fill="#f9d82b"/></svg>
<div class="t" style="left:666px;top:879.12px;font-size:10.75px;color:#000;">Netzeinspeisung</div>
<div class="t" style="left:780.3px;width:150px;text-align:right;top:878.20px;font-size:11.6px;color:#555;font-weight:bold;letter-spacing:0.28px;">111,72 kWh</div>
<div class="a" style="left:642px;top:902px;width:291px;height:2px;background:#bcbcbc"></div>
<div class="t" style="left:666px;top:917.12px;font-size:10.75px;color:#000;">Eigenverbrauchsquote</div>
<div class="t" style="left:780.3px;width:150px;text-align:right;top:916.20px;font-size:11.6px;color:#555;font-weight:bold;letter-spacing:0.28px;">72 %</div>
<div class="a" style="left:0px;top:1029px;width:1920px;height:51px;background:linear-gradient(#ececec,#fdfdfd 28px,#fff 32px)"></div>
<div class="t" style="left:10px;top:1039.00px;font-size:10.8px;color:#555;">&copy; 2025 SMA Solar Technology AG</div>
<div class="t" style="left:186.5px;top:1039.00px;font-size:10.8px;color:#555;">|</div>
<div class="t" style="left:200.8px;top:1039.00px;font-size:10.8px;color:#555;">Startseite</div>
<div class="t" style="left:257.2px;top:1039.00px;font-size:10.8px;color:#555;">|</div>
<div class="t" style="left:271px;top:1039.00px;font-size:10.8px;color:#555;">Information</div>
<div class="t" style="left:338.7px;top:1039.00px;font-size:10.8px;color:#555;">|</div>
<div class="t" style="left:352.9px;top:1039.00px;font-size:10.8px;color:#555;">Bedienungsanleitungen</div>
<div class="t" style="left:476.4px;top:1039.00px;font-size:10.8px;color:#555;">|</div>
<div class="t" style="left:490.3px;top:1039.00px;font-size:10.8px;color:#555;">FAQ</div>
<div class="t" style="left:521.2px;top:1039.00px;font-size:10.8px;color:#555;">|</div>
<div class="t" style="left:535.1px;top:1039.00px;font-size:10.8px;color:#555;">Nutzungsbedingungen</div>
<div class="t" style="left:653.6px;top:1039.00px;font-size:10.8px;color:#555;">|</div>
<div class="t" style="left:668.1px;top:1039.00px;font-size:10.8px;color:#555;">Datenschutzerkl&auml;rung</div>
<div class="t" style="left:784.5px;top:1039.00px;font-size:10.8px;color:#555;">|</div>
<div class="t" style="left:798.6px;top:1039.00px;font-size:10.8px;color:#555;">Impressum</div>
</body></html>
